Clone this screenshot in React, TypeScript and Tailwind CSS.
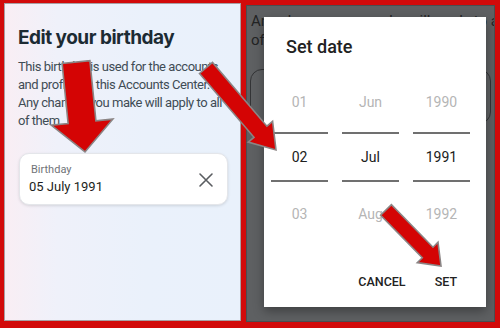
import React from "react";

type P = [number, number];

function arrowPoints(s: P, t: P, sw: number, hw: number, hl: number): string {
  const dx = t[0] - s[0];
  const dy = t[1] - s[1];
  const len = Math.hypot(dx, dy);
  const ux = dx / len;
  const uy = dy / len;
  const nx = -uy;
  const ny = ux;
  const bx = t[0] - ux * hl;
  const by = t[1] - uy * hl;
  const pts: P[] = [
    [s[0] + nx * sw / 2, s[1] + ny * sw / 2],
    [bx + nx * sw / 2, by + ny * sw / 2],
    [bx + nx * hw / 2, by + ny * hw / 2],
    [t[0], t[1]],
    [bx - nx * hw / 2, by - ny * hw / 2],
    [bx - nx * sw / 2, by - ny * sw / 2],
    [s[0] - nx * sw / 2, s[1] - ny * sw / 2],
  ];
  return pts.map((p) => `${p[0].toFixed(1)},${p[1].toFixed(1)}`).join(" ");
}

function Arrows() {
  const arrows = [
    arrowPoints([76, 62], [85, 152], 28, 62, 30),
    arrowPoints([206, 68], [276, 150], 17, 32, 24),
    arrowPoints([386, 210], [441, 266], 15, 29, 19),
  ];
  return (
    <svg
      className="absolute left-0 top-0 pointer-events-none"
      width={500}
      height={328}
      viewBox="0 0 500 328"
    >
      {arrows.map((pts, i) => (
        <polygon
          key={i}
          points={pts}
          fill="#d40404"
          stroke="#8b8585"
          strokeWidth={1.6}
          strokeLinejoin="miter"
        />
      ))}
    </svg>
  );
}

function Column({ a, b, c }: { a: string; b: string; c: string }) {
  return (
    <div className="w-[57px] flex flex-col items-stretch">
      <div className="h-[59px] flex items-center justify-center text-[14px] text-[#b5b5b5]">{a}</div>
      <div className="h-[2px] bg-[#707070]" />
      <div className="h-[46px] flex items-center justify-center text-[14px] text-[#202020]">{b}</div>
      <div className="h-[2px] bg-[#707070]" />
      <div className="h-[64px] flex items-center justify-center text-[14px] text-[#b5b5b5]">{c}</div>
    </div>
  );
}

export default function App() {
  return (
    <div className="relative w-[500px] h-[328px] bg-[#d20a0a] overflow-hidden flex items-start">
      {/* Left panel */}
      <div
        className="ml-[4px] mt-[3px] w-[237px] h-[318px] border border-[#a8a0a4] bg-[linear-gradient(90deg,#f9eef4_0%,#eff1fa_22%,#eaf1fb_60%,#e9f1fb_100%)] flex flex-col"
        style={{ fontFamily: "Roboto, 'Noto Sans', sans-serif" }}
      >
        <div
          className="pl-[13px] pt-[22px] text-[19px] leading-[24px] font-bold text-[#1c2b33] tracking-[-0.5px] whitespace-nowrap"
          style={{ fontFamily: "Inter, Roboto, sans-serif" }}
        >
          Edit your birthday
        </div>
        <div className="pl-[13px] pt-[8px] text-[13px] leading-[18px] text-[#3f4c55] tracking-[-0.45px] whitespace-nowrap">
          This birthday is used for the accounts
          <br />
          and profiles in this Accounts Center.
          <br />
          Any changes you make will apply to all
          <br />
          of them
        </div>
        <div className="ml-[14px] mt-[23px] w-[209px] h-[52px] bg-white rounded-[10px] shadow-[0_1px_3px_rgba(0,0,0,0.12)] border border-[#e4e6ea] flex items-center pl-[9px] pr-[13px]">
          <div className="flex-1 flex flex-col">
            <div className="pl-[2px] text-[11px] leading-[14px] text-[#6f7378]">Birthday</div>
            <div className="text-[13px] leading-[18px] text-[#1c1e21] mt-[1px]">05 July 1991</div>
          </div>
          <svg width="16" height="16" viewBox="0 0 16 16" className="mt-[2px]">
            <path d="M2 2 L14 14 M14 2 L2 14" stroke="#5a5d61" strokeWidth="1.6" strokeLinecap="round" />
          </svg>
        </div>
      </div>

      {/* Right panel */}
      <div
        className="relative ml-[5px] mt-[5px] w-[249px] h-[317px] bg-[#5e6062] border border-[#4b4d4f] overflow-hidden"
        style={{ fontFamily: "Roboto, 'Liberation Sans', sans-serif" }}
      >
        <div className="pl-[4px] pt-[6px] text-[15px] leading-[19px] text-[#232425] whitespace-nowrap">
          Any changes you make will apply to all
          <br />
          of them
        </div>
        <div className="mx-[3px] mt-[19px] h-[55px] rounded-[12px] border border-[#333436]" />

        {/* Dialog */}
        <div className="absolute left-[17px] top-[11px] w-[222px] h-[290px] bg-white shadow-[0_4px_10px_rgba(0,0,0,0.35)] flex flex-col">
          <div className="pl-[22px] pt-[18px] text-[18px] leading-[24px] font-medium text-[#222222]">
            Set date
          </div>
          <div className="mt-[14px] pl-[7px] flex gap-[14px]">
            <Column a="01" b="02" c="03" />
            <Column a="Jun" b="Jul" c="Aug" />
            <Column a="1990" b="1991" c="1992" />
          </div>
          <div className="mt-[27px] flex justify-end pr-[29px] gap-[29px] text-[12.5px] leading-[18px] font-medium text-[#222222]">
            <span>CANCEL</span>
            <span>SET</span>
          </div>
        </div>
      </div>

      <Arrows />
    </div>
  );
}
